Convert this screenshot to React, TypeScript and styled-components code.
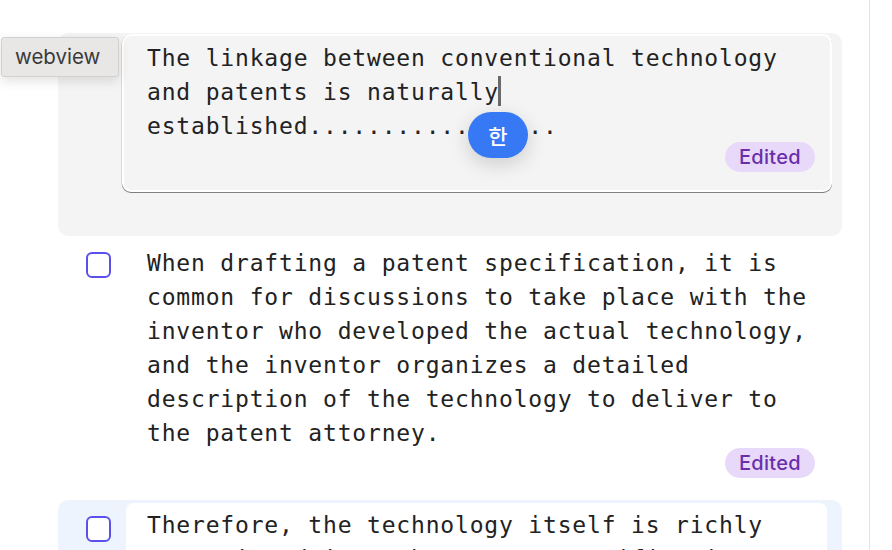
import * as React from 'react';
import styled, { createGlobalStyle } from 'styled-components';

type Tone = 'editing' | 'plain' | 'selected';

interface Paragraph {
  id: string;
  tone: Tone;
  lines: string[];
  edited?: boolean;
}

const paragraphs: Paragraph[] = [
  {
    id: 'p2',
    tone: 'plain',
    edited: true,
    lines: [
      'When drafting a patent specification, it is',
      'common for discussions to take place with the',
      'inventor who developed the actual technology,',
      'and the inventor organizes a detailed',
      'description of the technology to deliver to',
      'the patent attorney.',
    ],
  },
  {
    id: 'p3',
    tone: 'selected',
    lines: ['Therefore, the technology itself is richly', 'transmitted into the patent specification,'],
  },
];

const GlobalStyle = createGlobalStyle`
  html, body {
    margin: 0;
    padding: 0;
    background: #ffffff;
    font-family: Inter, "Noto Sans", sans-serif;
  }
`;

const Shell = styled.div`
  position: relative;
  display: flex;
  height: 550px;
  overflow: hidden;
`;

const List = styled.div`
  flex: none;
  width: 870px;
  box-sizing: border-box;
  padding: 33px 27px 0 58px;
  border-right: 1px solid #e3e3e3;
  display: flex;
  flex-direction: column;
`;

const Item = styled.div<{ $tone: Tone }>`
  border-radius: 10px;
  ${(p) =>
    p.$tone === 'editing'
      ? `
    background: #f4f4f4;
    padding: 1px 10px 44px 64px;
  `
      : `
    display: grid;
    grid-template-columns: 68px 1fr;
    align-items: start;
    padding: 3px 15px 22px 0;
    background: ${p.$tone === 'selected' ? '#edf4fd' : 'transparent'};
  `}
`;

const Checkbox = styled.span`
  display: block;
  box-sizing: border-box;
  width: 25px;
  height: 26px;
  margin: 13px 0 0 28px;
  border: 2px solid #5b50ec;
  border-radius: 6px;
  background: #ffffff;
`;

const Content = styled.div<{ $card?: boolean }>`
  padding: ${(p) => (p.$card ? '5px 12px 0 21px' : '7px 12px 0 21px')};
  border-radius: 8px;
  background: ${(p) => (p.$card ? '#ffffff' : 'transparent')};
`;

const Text = styled.div`
  font-family: "DejaVu Sans Mono", "Liberation Mono", monospace;
  font-size: 23px;
  letter-spacing: 0.82px;
  line-height: 34px;
  color: #222222;
  white-space: pre;
`;

const Editor = styled.div`
  position: relative;
  box-sizing: border-box;
  height: 158px;
  padding: 5px 15px 18px 23px;
  border: 2px solid #ffffff;
  border-radius: 9px;
  background: #f4f4f4;
  box-shadow: 0 1px 0 #7f7f7f, -0.5px 0.5px 0 #bdbdbd;
  display: flex;
  flex-direction: column;
`;

const Caret = styled.span`
  display: inline-block;
  width: 2.5px;
  height: 30px;
  margin-left: -1px;
  vertical-align: -6px;
  background: #6a6a6a;
`;

const BadgeRow = styled.div<{ $offset: number }>`
  display: flex;
  justify-content: flex-end;
  margin-top: ${(p) => p.$offset}px;
`;

const Badge = styled.span`
  display: inline-flex;
  align-items: center;
  justify-content: center;
  height: 30px;
  padding: 0 14px;
  border-radius: 15px;
  background: #e8d9fa;
  color: #6a2eaa;
  font-family: Inter, "Noto Sans", sans-serif;
  font-size: 20px;
  font-weight: 500;
  letter-spacing: 0.3px;
`;

const ImePill = styled.div`
  position: absolute;
  left: 344px;
  top: 76px;
  width: 60px;
  height: 46px;
  border-radius: 23px;
  background: #3779f5;
  color: #ffffff;
  display: flex;
  align-items: center;
  justify-content: center;
  font-family: "Noto Sans CJK KR", "Noto Sans", sans-serif;
  font-size: 21px;
  font-weight: 500;
  box-shadow: 0 6px 20px rgba(0, 0, 0, 0.16);
`;

const Tooltip = styled.div`
  position: absolute;
  left: 1px;
  top: 37px;
  box-sizing: border-box;
  width: 118px;
  height: 40px;
  padding: 0 0 2px 13px;
  display: flex;
  align-items: center;
  background: #e8e7e6;
  border: 1px solid #d2d1d0;
  border-radius: 3px;
  color: #3a3a3a;
  font-family: Inter, "Noto Sans", sans-serif;
  font-size: 20.5px;
  box-shadow: 0 4px 12px rgba(0, 0, 0, 0.12);
`;

export default function App() {
  return (
    <>
      <GlobalStyle />
      <Shell>
        <List>
          <Item $tone="editing">
            <Editor>
              <Text>
                {'The linkage between conventional technology\nand patents is naturally'}
                <Caret />
                {'\nestablished' + '.'.repeat(17)}
              </Text>
              <BadgeRow $offset={-1}>
                <Badge>Edited</Badge>
              </BadgeRow>
              <ImePill>한</ImePill>
            </Editor>
          </Item>

          {paragraphs.map((p) => (
            <Item key={p.id} $tone={p.tone}>
              <Checkbox />
              <Content $card={p.tone === 'selected'}>
                <Text>{p.lines.join('\n')}</Text>
                {p.edited && (
                  <BadgeRow $offset={-2}>
                    <Badge>Edited</Badge>
                  </BadgeRow>
                )}
              </Content>
            </Item>
          ))}
        </List>
        <Tooltip>webview</Tooltip>
      </Shell>
    </>
  );
}
